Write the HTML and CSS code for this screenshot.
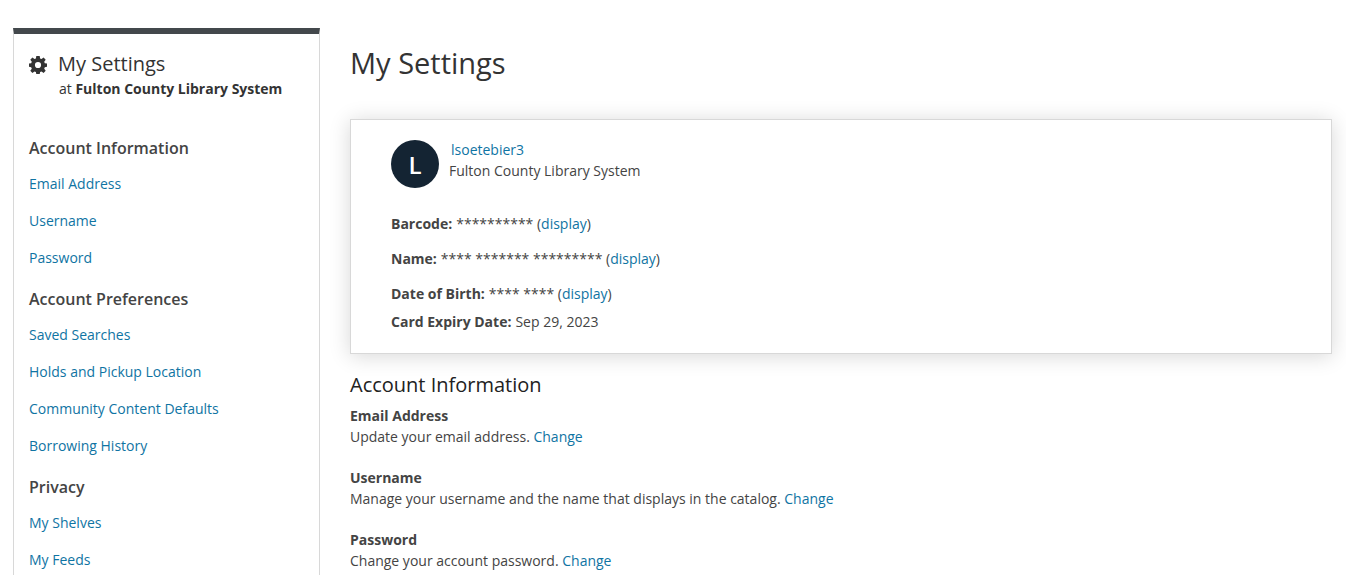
FILE: index.html
```html
<!DOCTYPE html>
<html lang="en">
<head>
<meta charset="utf-8">
<title>My Settings</title>
<link rel="stylesheet" href="styles.css">
</head>
<body>
<div class="page">
  <aside class="sidebar">
    <header class="sidebar-header">
      <svg class="gear" viewBox="0 0 18 18" aria-hidden="true"><path fill="currentColor" fill-rule="evenodd" d="M7.3 0h3.4l.4 2.500 1.400.6 2.100-1.500 2.100 2.100-1.500 2.100.6 1.400 2.200.4v3.200l-2.200.4-.6 1.500 1.500 2-2.100 2.200-2.100-1.500-1.400.6-.4 2.200H7.300L6.900 16l-1.400-.6-2.100 1.500-2.100-2.200 1.500-2-.6-1.500L0 10.800V7.600l2.200-.4.6-1.400-1.500-2.100 2.100-2.100 2.100 1.500 1.400-.6zM9 5.900a3.100 3.100 0 1 0 0 6.200 3.100 3.100 0 0 0 0-6.200z"/></svg>
      <div>
        <div class="sidebar-title">My Settings</div>
        <div class="sidebar-library">at <strong>Fulton County Library System</strong></div>
      </div>
    </header>
    <nav class="menu" aria-label="Settings">
      <h2 class="menu-title">Account Information</h2>
      <ul class="menu-list">
        <li><a class="menu-link" href="#email">Email Address</a></li>
        <li><a class="menu-link" href="#username">Username</a></li>
        <li><a class="menu-link" href="#password">Password</a></li>
      </ul>
      <h2 class="menu-title">Account Preferences</h2>
      <ul class="menu-list">
        <li><a class="menu-link" href="#searches">Saved Searches</a></li>
        <li><a class="menu-link" href="#holds">Holds and Pickup Location</a></li>
        <li><a class="menu-link" href="#community">Community Content Defaults</a></li>
        <li><a class="menu-link" href="#history">Borrowing History</a></li>
      </ul>
      <h2 class="menu-title">Privacy</h2>
      <ul class="menu-list">
        <li><a class="menu-link" href="#shelves">My Shelves</a></li>
        <li><a class="menu-link" href="#feeds">My Feeds</a></li>
      </ul>
    </nav>
  </aside>
  <main class="main">
    <h1 class="page-title">My Settings</h1>
    <section class="card">
      <div class="profile">
        <div class="avatar">L</div>
        <div>
          <div><a class="profile-name" href="#profile">lsoetebier3</a></div>
          <div>Fulton County Library System</div>
        </div>
      </div>
      <dl class="details">
        <div class="detail"><dt>Barcode:</dt><dd>********** (<button type="button" class="reveal">display</button>)</dd></div>
        <div class="detail"><dt>Name:</dt><dd>**** ******* ********* (<button type="button" class="reveal">display</button>)</dd></div>
        <div class="detail"><dt>Date of Birth:</dt><dd>**** **** (<button type="button" class="reveal">display</button>)</dd></div>
        <div class="detail detail-compact"><dt>Card Expiry Date:</dt><dd>Sep 29, 2023</dd></div>
      </dl>
    </section>
    <section class="settings">
      <h2 class="section-title">Account Information</h2>
      <div class="setting" id="email">
        <h3 class="setting-title">Email Address</h3>
        <p class="setting-text">Update your email address. <a href="#change-email">Change</a></p>
      </div>
      <div class="setting" id="username">
        <h3 class="setting-title">Username</h3>
        <p class="setting-text">Manage your username and the name that displays in the catalog. <a href="#change-username">Change</a></p>
      </div>
      <div class="setting" id="password">
        <h3 class="setting-title">Password</h3>
        <p class="setting-text">Change your account password. <a href="#change-password">Change</a></p>
      </div>
    </section>
  </main>
</div>
</body>
</html>
```
FILE: styles.css
```css
* { box-sizing: border-box; }
body {
  margin: 0;
  background: #fff;
  color: #444;
  font: 14px/21px "Open Sans", sans-serif;
}
h1, h2, h3, p, ul, dl, dd { margin: 0; padding: 0; }
a { color: #0f74a3; text-decoration: none; }
a:hover, .reveal:hover { text-decoration: underline; }

.page {
  display: grid;
  grid-template-columns: 307px minmax(0, 1fr);
  gap: 30px;
  min-height: 100vh;
  padding: 28px 14px 0 13px;
}
.sidebar {
  padding: 16px 15px 0;
  border: 1px solid #d8d8d8;
  border-top: 6px solid #43484c;
  border-bottom: 0;
}
.sidebar-header {
  display: flex;
  gap: 11px;
  color: #333;
}
.gear { width: 18px; height: 18px; margin-top: 6px; }
.sidebar-title { font-size: 20px; line-height: 28px; }
.sidebar-library { padding-left: 1px; }
strong { font-weight: 700; }
.menu { margin-top: 37px; }
.menu-title {
  font-size: 16px;
  line-height: 24px;
  font-weight: 600;
}
.menu-list {
  margin: 5px 0 11px;
  list-style: none;
}
.menu-link { display: block; padding: 8px 0; }

.main { padding-top: 14px; }
.page-title {
  margin-bottom: 35px;
  color: #333;
  font-size: 29px;
  line-height: 42px;
  font-weight: 500;
}
.card {
  padding: 19px 40px 21px;
  border: 1px solid #d8d8d8;
  background: #fff;
  box-shadow: 0 2px 20px rgba(0, 0, 0, 0.16);
}
.profile { display: flex; gap: 10px; }
.avatar {
  display: grid;
  place-items: center;
  width: 48px;
  height: 48px;
  margin-top: 1px;
  border-radius: 50%;
  background: #142433;
  color: #fff;
  font-size: 24px;
  font-weight: 600;
}
.profile-name { padding-left: 2px; }
.details { margin-top: 25px; }
.detail {
  display: flex;
  gap: 4px;
  margin-top: 14px;
}
.detail:first-child { margin-top: 0; }
.detail-compact { margin-top: 7px; }
dt { font-weight: 700; }
.reveal {
  padding: 0;
  border: 0;
  background: none;
  color: #0f74a3;
  font: inherit;
  cursor: pointer;
}

.settings { margin-top: 16px; }
.section-title {
  margin-bottom: 5px;
  color: #222;
  font-size: 20px;
  line-height: 30px;
  font-weight: 400;
}
.setting { margin-bottom: 20px; }
.setting:last-child { margin-bottom: 0; }
.setting-title { font-size: 14px; font-weight: 700; }
```
